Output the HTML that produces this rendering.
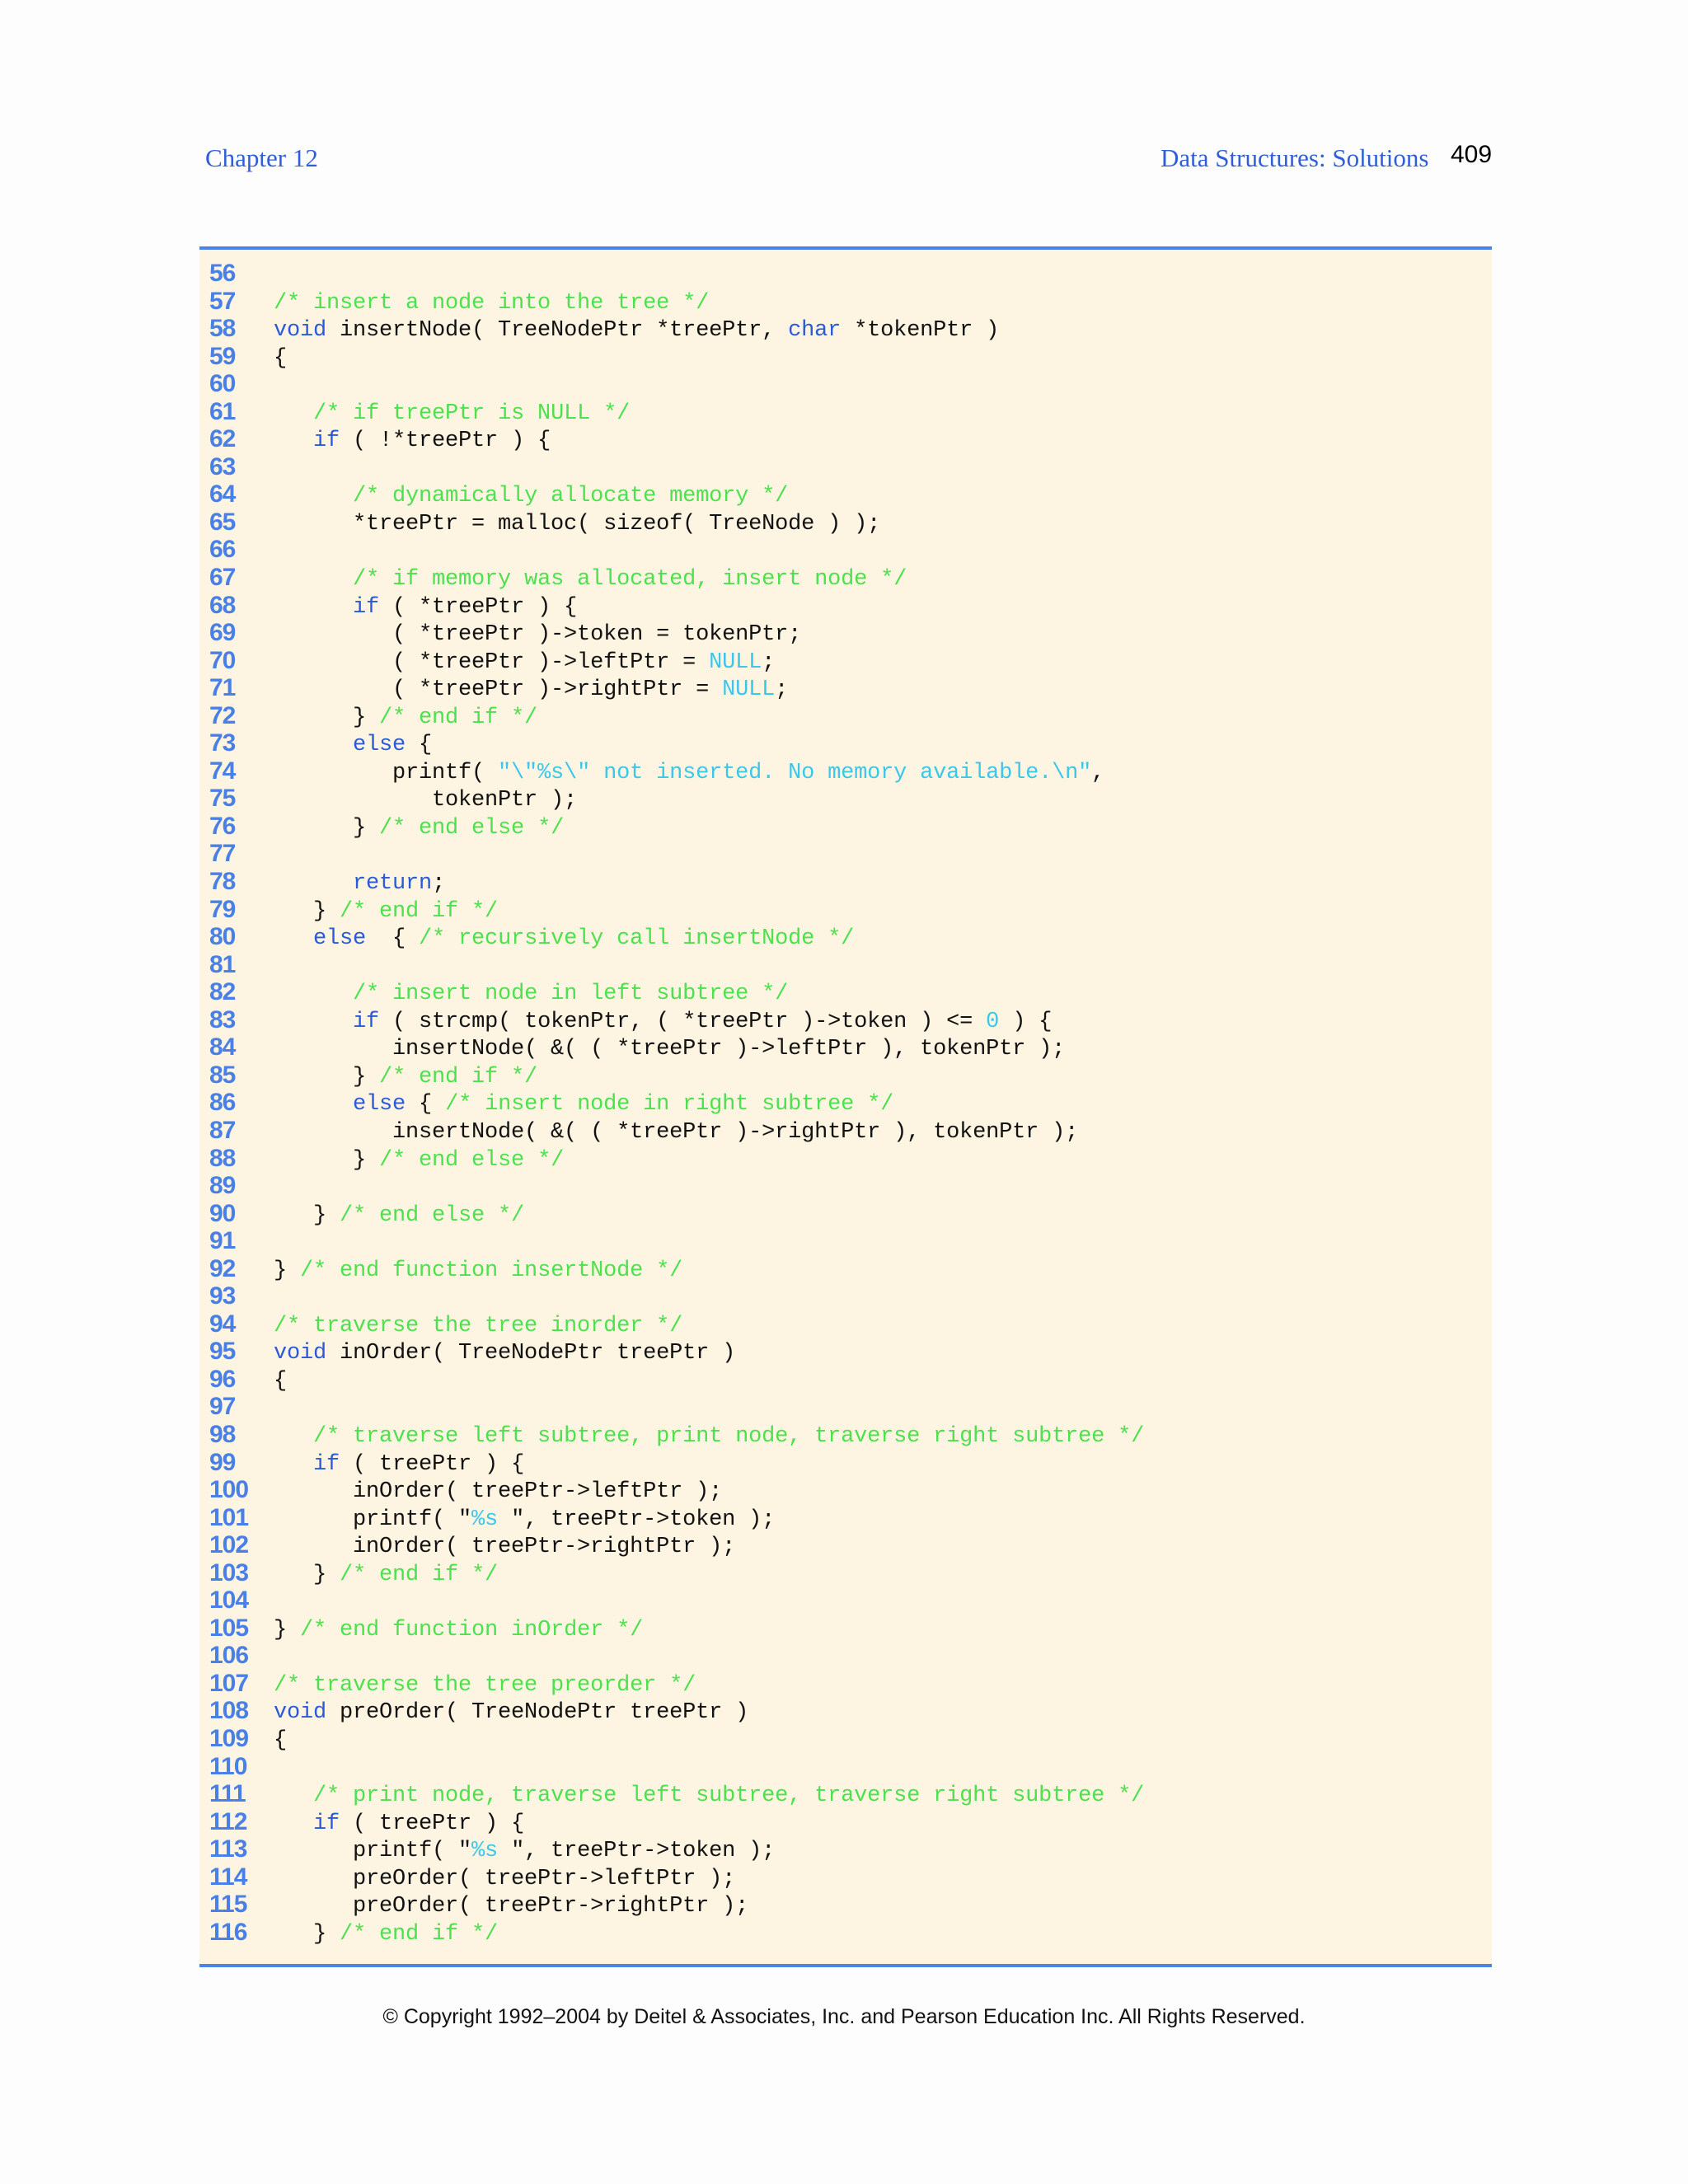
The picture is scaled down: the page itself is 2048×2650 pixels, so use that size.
<!DOCTYPE html>
<html><head><meta charset="utf-8"><style>
html,body{margin:0;padding:0;background:#fdfdfe;}
body{width:2048px;height:2650px;position:relative;overflow:hidden;}
.hdr{position:absolute;font-family:"Liberation Serif",serif;color:#2f5ed8;font-size:31px;top:174px;}
.pg{position:absolute;left:1760px;top:171px;font-family:"Liberation Sans",sans-serif;font-size:30px;color:#000;}
.box{position:absolute;left:242px;top:299px;width:1568px;height:2088px;background:#fdf5e2;border-top:4px solid #4a84e6;border-bottom:4px solid #4a84e6;box-sizing:border-box;}
pre{margin:0;position:absolute;top:315px;font-family:"Liberation Mono",monospace;font-size:27px;line-height:33.55px;letter-spacing:-0.2px;color:#111;}
.nums{left:254px;font-family:"Liberation Sans",sans-serif;font-weight:bold;font-size:30px;color:#4a80e6;letter-spacing:-1px;}
.code{left:332px;top:318px;}
.k{color:#2a5ad8}.c{color:#4ee04e}.s{color:#3cc6ea}
.copy{position:absolute;top:2433px;left:0;width:2048px;text-align:center;font-family:"Liberation Sans",sans-serif;font-size:25px;color:#111;}
</style></head><body>
<div class="hdr" style="left:249px">Chapter 12</div>
<div class="hdr" style="left:1408px">Data Structures: Solutions</div>
<div class="pg">409</div>
<div class="box"></div>
<pre class="nums">56
57
58
59
60
61
62
63
64
65
66
67
68
69
70
71
72
73
74
75
76
77
78
79
80
81
82
83
84
85
86
87
88
89
90
91
92
93
94
95
96
97
98
99
100
101
102
103
104
105
106
107
108
109
110
111
112
113
114
115
116</pre>
<pre class="code">

<span class="c">/* insert a node into the tree */</span>
<span class="k">void</span> insertNode( TreeNodePtr *treePtr, <span class="k">char</span> *tokenPtr )
{

   <span class="c">/* if treePtr is NULL */</span>
   <span class="k">if</span> ( !*treePtr ) {

      <span class="c">/* dynamically allocate memory */</span>
      *treePtr = malloc( sizeof( TreeNode ) );

      <span class="c">/* if memory was allocated, insert node */</span>
      <span class="k">if</span> ( *treePtr ) {
         ( *treePtr )-&gt;token = tokenPtr;
         ( *treePtr )-&gt;leftPtr = <span class="s">NULL</span>;
         ( *treePtr )-&gt;rightPtr = <span class="s">NULL</span>;
      } <span class="c">/* end if */</span>
      <span class="k">else</span> {
         printf( <span class="s">"\"%s\" not inserted. No memory available.\n"</span>,
            tokenPtr );
      } <span class="c">/* end else */</span>

      <span class="k">return</span>;
   } <span class="c">/* end if */</span>
   <span class="k">else</span>  { <span class="c">/* recursively call insertNode */</span>

      <span class="c">/* insert node in left subtree */</span>
      <span class="k">if</span> ( strcmp( tokenPtr, ( *treePtr )-&gt;token ) &lt;= <span class="s">0</span> ) {
         insertNode( &amp;( ( *treePtr )-&gt;leftPtr ), tokenPtr );
      } <span class="c">/* end if */</span>
      <span class="k">else</span> { <span class="c">/* insert node in right subtree */</span>
         insertNode( &amp;( ( *treePtr )-&gt;rightPtr ), tokenPtr );
      } <span class="c">/* end else */</span>

   } <span class="c">/* end else */</span>

} <span class="c">/* end function insertNode */</span>

<span class="c">/* traverse the tree inorder */</span>
<span class="k">void</span> inOrder( TreeNodePtr treePtr )
{

   <span class="c">/* traverse left subtree, print node, traverse right subtree */</span>
   <span class="k">if</span> ( treePtr ) {
      inOrder( treePtr-&gt;leftPtr );
      printf( "<span class="s">%s </span>", treePtr-&gt;token );
      inOrder( treePtr-&gt;rightPtr );
   } <span class="c">/* end if */</span>

} <span class="c">/* end function inOrder */</span>

<span class="c">/* traverse the tree preorder */</span>
<span class="k">void</span> preOrder( TreeNodePtr treePtr )
{

   <span class="c">/* print node, traverse left subtree, traverse right subtree */</span>
   <span class="k">if</span> ( treePtr ) {
      printf( "<span class="s">%s </span>", treePtr-&gt;token );
      preOrder( treePtr-&gt;leftPtr );
      preOrder( treePtr-&gt;rightPtr );
   } <span class="c">/* end if */</span></pre>
<div class="copy">© Copyright 1992–2004 by Deitel &amp; Associates, Inc. and Pearson Education Inc. All Rights Reserved.</div>
</body></html>
